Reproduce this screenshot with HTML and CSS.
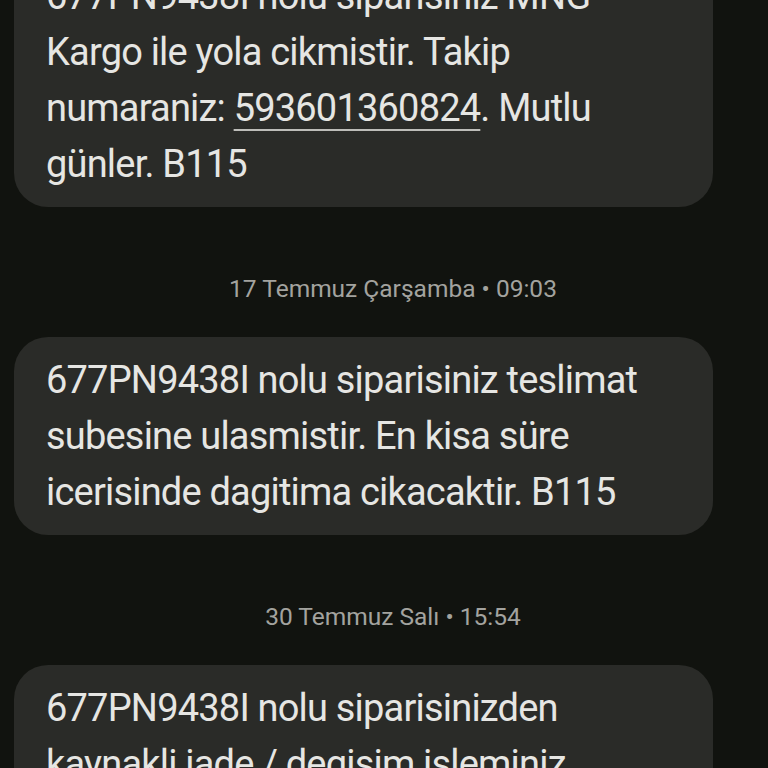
FILE: index.html
```html
<!DOCTYPE html>
<html lang="tr">
<head>
    <meta charset="UTF-8">
    <meta name="viewport" content="width=device-width, initial-scale=1.0">
    <title>Mesajlar</title>
    <link rel="stylesheet" href="styles.css">
</head>
<body>

    <div class="thread">
        <div class="bubble first">
            677PN9438I nolu siparisiniz MNG Kargo ile yola cikmistir. Takip numaraniz: <a class="link" href="#">593601360824</a>. Mutlu günler. B115
        </div>

        <div class="stamp">17 Temmuz Çarşamba • 09:03</div>

        <div class="bubble">
            677PN9438I nolu siparisiniz teslimat subesine ulasmistir. En kisa süre icerisinde dagitima cikacaktir. B115
        </div>

        <div class="stamp">30 Temmuz Salı • 15:54</div>

        <div class="bubble">
            677PN9438I nolu siparisinizden kaynakli iade / degisim isleminiz baslatilmistir. B115
        </div>
    </div>

</body>
</html>
```

FILE: styles.css
```css
/* General reset */
* {
    margin: 0;
    padding: 0;
    box-sizing: border-box;
}

body {
    background-color: #11130f;
    font-family: Roboto, "Noto Sans", sans-serif;
    overflow: hidden;
}

.thread {
    display: flex;
    flex-direction: column;
    align-items: flex-start;
    padding-left: 14px;
}

.bubble {
    width: 699px;
    padding: 15px 32px;
    background-color: #2a2b28;
    border-radius: 34px;
    color: #e6e6e3;
    font-size: 38px;
    line-height: 56px;
    letter-spacing: -0.8px;
}

.bubble.first {
    margin-top: -47px;
}

.link {
    color: inherit;
    text-decoration: underline;
    text-decoration-thickness: 2px;
    text-underline-offset: 8px;
    text-decoration-color: #bdbdb9;
}

.stamp {
    align-self: stretch;
    margin: 67px 0 33px;
    padding-left: 4px;
    text-align: center;
    color: #a3a39f;
    font-size: 24.5px;
    line-height: 30px;
}
```
